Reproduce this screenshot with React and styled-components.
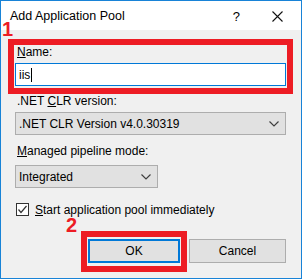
import React from 'react';
import styled, { createGlobalStyle } from 'styled-components';

const GlobalStyle = createGlobalStyle`
    html, body { margin: 0; padding: 0; background: #ffffff; }
    body { font-family: "Liberation Sans", Arial, sans-serif; font-size: 12px; color: #000; }
    * { box-sizing: border-box; }
`;

function Chevron() {
    return (
        <svg width="10" height="6" viewBox="0 0 10 6">
            <polyline points="0.5,0.5 5,5 9.5,0.5" fill="none" stroke="#404040" strokeWidth="1.2" />
        </svg>
    );
}

function CloseIcon() {
    return (
        <svg width="11" height="11" viewBox="0 0 11 11">
            <path d="M0.5 0.5 L10.5 10.5 M10.5 0.5 L0.5 10.5" stroke="#111" strokeWidth="1.1" />
        </svg>
    );
}

function CheckMark() {
    return (
        <svg width="11" height="11" viewBox="0 0 11 11">
            <polyline points="1.5,5.5 4,8.5 9.5,2" fill="none" stroke="#333" strokeWidth="1.2" />
        </svg>
    );
}

function App() {
    return (
        <>
            <GlobalStyle />
            <Window>
                <TitleBar>
                    <Title>Add Application Pool</Title>
                    <TitleButtons>
                        <Help>?</Help>
                        <CloseIcon />
                    </TitleButtons>
                </TitleBar>
                <Body>
                    <Label><u>N</u>ame:</Label>
                    <TextBox>iis<Caret /></TextBox>
                    <Label $top={8}>.NET <u>C</u>LR version:</Label>
                    <Select $width={271}>
                        <span>.NET CLR Version v4.0.30319</span>
                        <Chevron />
                    </Select>
                    <Label $top={9}><u>M</u>anaged pipeline mode:</Label>
                    <Select $width={143} $top={3}>
                        <span>Integrated</span>
                        <Chevron />
                    </Select>
                    <CheckRow>
                        <CheckBox><CheckMark /></CheckBox>
                        <span><u>S</u>tart application pool immediately</span>
                    </CheckRow>
                    <Buttons>
                        <Button $width={92} $primary>OK</Button>
                        <Button $width={97}>Cancel</Button>
                    </Buttons>
                </Body>

                <Marker $left={8} $top={39} $width={285} $height={55} />
                <Marker $left={81} $top={231} $width={106} $height={41} />
                <Step $left={2} $top={22}>1</Step>
                <Step $left={66} $top={218}>2</Step>
            </Window>
        </>
    );
}

const Window = styled.div`
    position: relative;
    width: 302px;
    height: 279px;
    border: 1px solid #1883d7;
    background: #f0f0f0;
    display: flex;
    flex-direction: column;
    overflow: hidden;
`;

const TitleBar = styled.div`
    height: 29px;
    background: #ffffff;
    display: flex;
    align-items: center;
    justify-content: space-between;
    padding: 1px 18px 0 9px;
`;

const Title = styled.div`
    font-size: 12.5px;
`;

const TitleButtons = styled.div`
    display: flex;
    align-items: center;
    gap: 32px;
`;

const Help = styled.span`
    font-size: 13px;
`;

const Body = styled.div`
    display: flex;
    flex-direction: column;
    padding: 15px 14px 0 14px;
`;

const Label = styled.div`
    line-height: 15px;
    margin-top: ${p => p.$top || 0}px;
    margin-bottom: 3px;
    padding-left: 2px;
`;

const TextBox = styled.div`
    height: 23px;
    width: 271px;
    background: #fff;
    border: 1px solid #0078d7;
    display: flex;
    align-items: center;
    padding-left: 3px;
    font-size: 12px;
`;

const Caret = styled.span`
    display: inline-block;
    width: 1px;
    height: 14px;
    background: #000;
    margin-left: 1px;
`;

const Select = styled.div`
    height: 23px;
    width: ${p => p.$width}px;
    margin-top: ${p => p.$top || 0}px;
    background: #e1e1e1;
    border: 1px solid #adadad;
    display: flex;
    align-items: center;
    justify-content: space-between;
    padding: 0 6px 0 3px;
`;

const CheckRow = styled.div`
    display: flex;
    align-items: center;
    gap: 6px;
    margin-top: 14px;
    height: 15px;
    line-height: 14px;
    padding-left: 1px;
`;

const CheckBox = styled.div`
    width: 13px;
    height: 13px;
    border: 1px solid #333;
    background: #fff;
    display: flex;
    align-items: center;
    justify-content: center;
`;

const Buttons = styled.div`
    display: flex;
    justify-content: flex-end;
    gap: 9px;
    margin-top: 22px;
    padding-right: 1px;
`;

const Button = styled.div`
    width: ${p => p.$width}px;
    height: 24px;
    background: #e1e1e1;
    border: ${p => (p.$primary ? '2px solid #0078d7' : '1px solid #adadad')};
    display: flex;
    align-items: center;
    justify-content: center;
`;

const Marker = styled.div`
    position: absolute;
    left: ${p => p.$left - 1}px;
    top: ${p => p.$top - 1}px;
    width: ${p => p.$width}px;
    height: ${p => p.$height}px;
    border: 6px solid #ed1c24;
`;

const Step = styled.div`
    position: absolute;
    left: ${p => p.$left - 1}px;
    top: ${p => p.$top - 1}px;
    font-family: "Liberation Sans", Arial, sans-serif;
    font-weight: bold;
    font-size: 20px;
    line-height: 15px;
    color: #ed1c24;
`;

export default App;
